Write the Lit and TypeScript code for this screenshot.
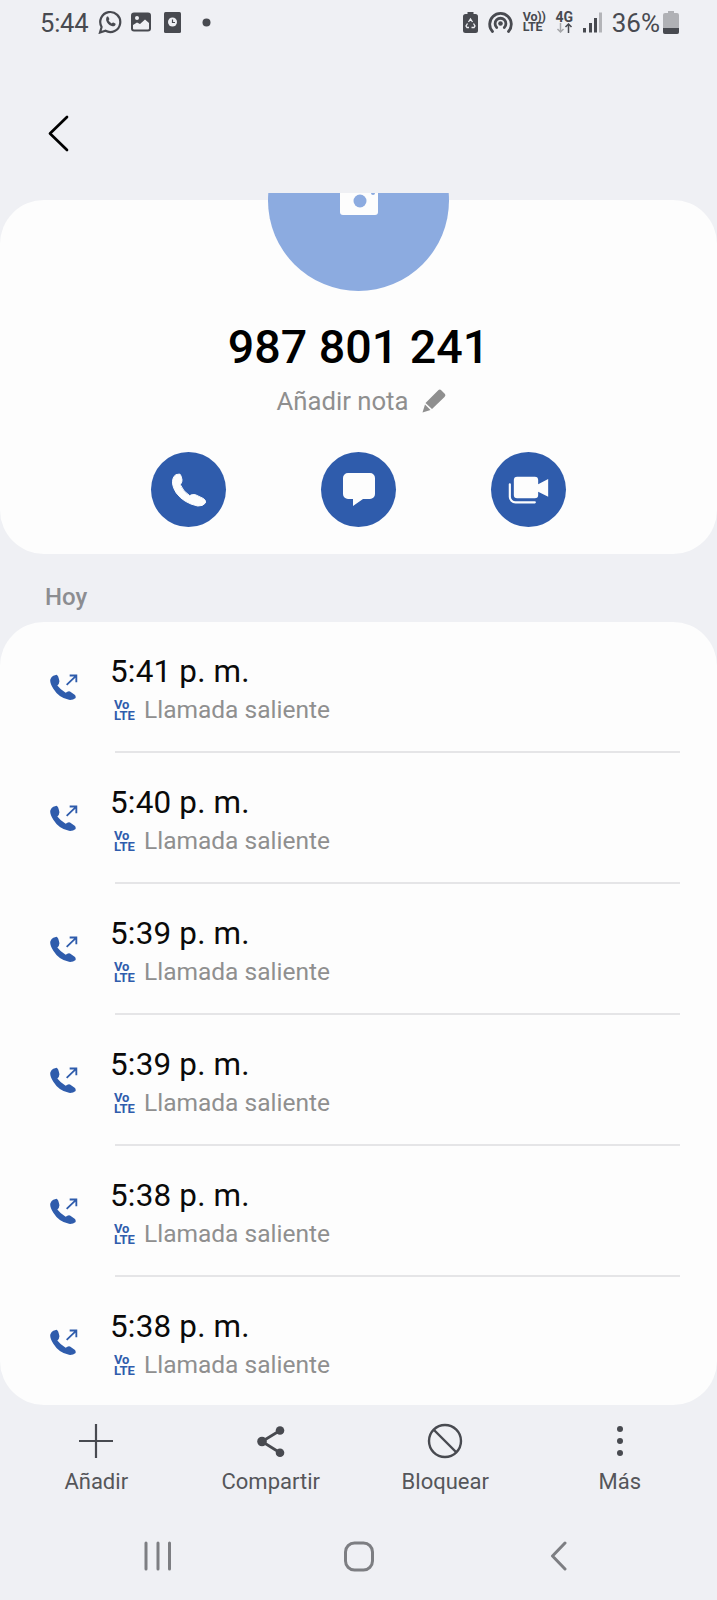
import { LitElement, html, css } from "lit";
import { customElement } from "lit/decorators.js";

const rows = ["5:41 p. m.", "5:40 p. m.", "5:39 p. m.", "5:39 p. m.", "5:38 p. m.", "5:38 p. m."];

@customElement("app-root")
export class AppRoot extends LitElement {
  static styles = css`
    :host { display: block; width: 717px; height: 1600px; background: #eff0f4; font-family: Roboto, "Liberation Sans", sans-serif; overflow: hidden; }
    .status { height: 46px; display: flex; align-items: center; padding: 0 38px 0 40px; color: #484a50; }
    .clock { font-size: 25.500px; line-height: 44px; width: 50px; letter-spacing: -0.2px; }
    .st { display: block; flex: none; margin-bottom: 2px; }
    .spacer { flex: 1; }
    .pct { font-size: 26px; line-height: 44px; margin-left: 10px; }
    .tiny { font-size: 12.500px; font-weight: 700; line-height: 10.500px; margin-bottom: 2px; flex: none; }
    .volte-st { margin-left: 10px; width: 21px; white-space: nowrap; letter-spacing: -0.2px; }
    .g4 { margin-left: 12px; width: 17px; display: flex; flex-direction: column; align-items: center; font-size: 14px; line-height: 11px; }
    .back { height: 147px; padding: 69px 0 0 47px; box-sizing: border-box; }
    .back svg { display: block; }
    .head { background: #fdfdfd; border-radius: 44px; height: 354px; margin-top: 7px; display: flex; flex-direction: column; align-items: center; }
    .clip { width: 181px; height: 98px; margin-top: -7px; overflow: hidden; flex: none; }
    .avatar { width: 181px; height: 181px; border-radius: 50%; background: #8cabe0; margin-top: -83px; position: relative; }
    .avatar svg { position: absolute; left: 72px; top: 69px; }
    .num { font-size: 46.600px; font-weight: 500; line-height: 54px; margin-top: 29px; color: #000; }
    .note { display: flex; align-items: center; font-size: 25.700px; line-height: 30px; color: #8f8f8f; margin: 12px 0 0 6px; gap: 14px; }
    .actions { display: flex; gap: 95px; margin-top: 36px; }
    .act { width: 75px; height: 75px; border-radius: 50%; background: #2f5cac; display: flex; align-items: center; justify-content: center; }
    .hoy { font-size: 24px; font-weight: 500; color: #8c8d91; line-height: 28px; padding: 29px 0 0 45px; height: 68px; box-sizing: border-box; }
    .list { background: #fdfdfd; border-radius: 44px; height: 783px; display: flex; flex-direction: column; }
    .row { height: 131px; flex: none; display: flex; }
    .ic { width: 115px; flex: none; padding: 52px 0 0 50px; box-sizing: border-box; }
    .ic svg { display: block; }
    .txt { flex: 1; margin-right: 37px; padding-top: 30px; border-bottom: 2px solid #e5e5e7; box-sizing: border-box; }
    .row:last-child .txt { border-bottom: none; }
    .time { font-size: 31.400px; line-height: 40px; color: #0a0a0a; letter-spacing: 0.2px; margin-left: -5px; }
    .sub { display: flex; align-items: center; font-size: 24.500px; line-height: 30px; color: #8f8f8f; margin: 3px 0 0 -1px; gap: 7px; }
    .volte { color: #2f5cac; font-size: 13px; font-weight: 700; line-height: 11px; width: 23px; letter-spacing: -0.1px; }
    .tools { display: grid; grid-template-columns: repeat(4, 174.500px); height: 110px; padding: 18px 0 0 9px; box-sizing: border-box; }
    .tool { display: flex; flex-direction: column; align-items: center; color: #55565a; font-size: 22px; line-height: 28px; gap: 9px; }
    .tool svg { display: block; }
    .nav { display: grid; grid-template-columns: repeat(3, 200.500px); height: 85px; justify-items: center; padding: 26px 0 0 58px; box-sizing: border-box; }
    .nav svg { display: block; }
  `;

  private dial(kind: string) {
    return html`<div class="act">${kind === "phone"
      ? html`<svg width="34" height="34" viewBox="95 95 102 102"><path fill="#fdfdfd" stroke="#fdfdfd" stroke-width="3" stroke-linejoin="round" d="M107 100L118 98Q122 100 125 115Q126 122 120 130Q128 150 148 163Q155 158 165 160L190 172Q198 178 195 185Q188 195 172 194Q130 185 108 155Q92 130 98 112Q100 104 107 100Z"/></svg>`
      : kind === "msg"
      ? html`<svg width="32" height="33" viewBox="0 0 32 33"><path fill="#fdfdfd" d="M5 0h22a5 5 0 0 1 5 5v16a5 5 0 0 1-5 5H20L10 33v-7H5a5 5 0 0 1-5-5V5a5 5 0 0 1 5-5Z"/></svg>`
      : html`<svg width="42" height="30" viewBox="85 100 125 90"><path fill="#fdfdfd" d="M112 105H165a10 10 0 0 1 10 10V128L205 112V165L175 150V160a10 10 0 0 1-10 10H112a10 10 0 0 1-10-10V115a10 10 0 0 1 10-10Z"/><path fill="none" stroke="#fdfdfd" stroke-width="6.500" stroke-linecap="round" d="M90 128V165a17 17 0 0 0 17 17H165"/></svg>`}</div>`;
  }

  private statusLeft() {
    return html`
      <svg class="st" width="24" height="24" viewBox="0 0 24 24" style="margin-left:8px"><path fill="none" stroke="#484a50" stroke-width="2.200" d="M2 22.500l1.600-5.500A10 10 0 1 1 7.500 20.800Z"/><path fill="#484a50" d="M8.800 6.800c.4-.4 1.200-.5 1.500 0l1 2c.2.400 0 .8-.7 1.500.6 1.400 1.800 2.500 3.200 3.100.7-.9 1.100-1.100 1.500-.9l2 1c.4.200.4 1 .1 1.600-.6 1.200-2.200 1.500-3.700 1-2.700-.9-4.600-2.800-5.400-5.300-.4-1.500 0-3 .5-4Z"/></svg>
      <svg class="st" width="20" height="20" viewBox="0 0 20 20" style="margin-left:9px"><rect x="0" y="0.500" width="20" height="19" rx="3" fill="#484a50"/><circle cx="6" cy="6" r="2" fill="#eff0f4"/><path fill="#eff0f4" d="M2 16.500v-3.500l4-2.500 3 1.500 5-4.500 4 3.500v5.500a1 1 0 0 1-1 1H3a1 1 0 0 1-1-1Z"/></svg>
      <svg class="st" width="17" height="21" viewBox="0 0 17 21" style="margin-left:13px"><rect width="17" height="21" rx="1.500" fill="#484a50"/><circle cx="8.500" cy="10" r="4.500" fill="#eff0f4"/><path fill="none" stroke="#484a50" stroke-width="1.200" d="M8.500 7.500V10.500H11"/></svg>
      <svg class="st" width="9" height="9" viewBox="0 0 9 9" style="margin-left:21px"><circle cx="4.500" cy="4.500" r="4" fill="#484a50"/></svg>`;
  }

  private statusRight() {
    return html`
      <svg class="st" width="15" height="21" viewBox="0 0 15 21"><path fill="#484a50" d="M4.500 0h6v2h2a2.500 2.500 0 0 1 2.500 2.500v14a2.500 2.500 0 0 1-2.500 2.500h-10A2.500 2.500 0 0 1 0 18.500v-14A2.500 2.500 0 0 1 2.500 2h2Z"/><path fill="none" stroke="#eff0f4" stroke-width="1.300" d="M5.500 10L7.500 7l2 3M10.500 11.500l1.500 2.500-1 1.500H8.500M6 15.500H4L3 14l1.500-2.500"/></svg>
      <svg class="st" width="25" height="21" viewBox="0 0 25 21" style="margin-left:10px"><g fill="none" stroke="#484a50" stroke-width="2.800" stroke-linecap="round"><path d="M4.500 19.500A10.800 10.800 0 1 1 20.500 19.500"/><path d="M8.700 15.500A5.400 5.400 0 1 1 16.300 15.500"/></g><circle cx="12.500" cy="11.500" r="2.300" fill="#484a50"/></svg>
      <div class="tiny volte-st">Vo))<br/>LTE</div>
      <div class="tiny g4">4G<svg width="17" height="10" viewBox="0 0 17 10"><path fill="none" stroke="#a6a7ab" stroke-width="1.500" d="M4.500 0v9M1.500 6l3 3 3-3"/><path fill="none" stroke="#484a50" stroke-width="1.500" d="M12.500 10V1M9.500 4l3-3 3 3"/></svg></div>
      <svg class="st" width="19" height="21" viewBox="0 0 19 21" style="margin-left:10px"><rect x="0" y="16" width="3" height="4.500" fill="#484a50"/><rect x="6" y="11" width="3" height="9.500" fill="#484a50"/><rect x="11" y="6" width="3" height="14.500" fill="#484a50"/><rect x="16" y="0.500" width="3" height="20" fill="#b3b4b8"/></svg>
      <span class="pct">36%</span>
      <svg class="st" width="16" height="23" viewBox="0 0 16 23" style="margin-left:3px"><path fill="#b0b1b5" d="M5 0h6v2h3a2 2 0 0 1 2 2v17a2 2 0 0 1-2 2H2a2 2 0 0 1-2-2V4a2 2 0 0 1 2-2h3Z"/><path fill="#484a50" d="M0 17h16v4a2 2 0 0 1-2 2H2a2 2 0 0 1-2-2Z"/></svg>`;
  }

  private row(t: string) {
    return html`<div class="row">
      <div class="ic"><svg width="28" height="27" viewBox="28 28 84 80"><path fill="#2f5cac" d="M38 33L48 30Q53 32 56 48Q57 55 50 62Q60 75 75 84Q82 78 88 80L102 90Q107 95 104 100Q97 106 85 105Q55 100 38 72Q25 50 30 42Q32 36 38 33Z"/><path fill="none" stroke="#2f5cac" stroke-width="5.500" d="M78 60L106 33M87 32H107V52"/></svg></div>
      <div class="txt">
        <div class="time">${t}</div>
        <div class="sub"><div class="volte">Vo<br/>LTE</div>Llamada saliente</div>
      </div>
    </div>`;
  }

  render() {
    return html`
      <div class="status">
        <span class="clock">5:44</span>
        ${this.statusLeft()}
        <div class="spacer"></div>
        ${this.statusRight()}
      </div>
      <div class="back"><svg width="24" height="38" viewBox="0 0 24 38"><path fill="none" stroke="#000" stroke-width="2.700" stroke-linecap="round" stroke-linejoin="round" d="M20 2L3 18.500 20 35"/></svg></div>
      <div class="head">
        <div class="clip"><div class="avatar"><svg width="38" height="36" viewBox="0 0 38 36"><path fill="#fdfdfd" d="M0 0h38v33a3 3 0 0 1-3 3H3a3 3 0 0 1-3-3Z"/><circle cx="20" cy="22" r="6.500" fill="#8cabe0"/><circle cx="33" cy="14" r="2" fill="#8cabe0"/></svg></div></div>
        <div class="num">987 801 241</div>
        <div class="note">Añadir nota <svg width="24" height="24" viewBox="0 0 24 24"><path fill="#8f8f8f" d="M16.500 1Q18 0 19.500 1.500L23 5Q24 6.500 22.500 8L10 20 3.500 14ZM3 15.500L8.500 21 .5 23.500Z"/></svg></div>
        <div class="actions">${this.dial("phone")}${this.dial("msg")}${this.dial("video")}</div>
      </div>
      <div class="hoy">Hoy</div>
      <div class="list">${rows.map((r) => this.row(r))}</div>
      <div class="tools">
        <div class="tool"><svg width="38" height="36" viewBox="0 0 38 36"><path fill="none" stroke="#484a50" stroke-width="2.200" d="M19 1v34M2 18h34"/></svg>Añadir</div>
        <div class="tool"><svg width="38" height="36" viewBox="0 0 38 36"><g fill="#484a50"><circle cx="10" cy="18.500" r="4.800"/><circle cx="28" cy="7.500" r="4.300"/><circle cx="28" cy="29.700" r="4.300"/></g><path fill="none" stroke="#484a50" stroke-width="2.800" d="M28 7.500L10 18.500l18 11.200"/></svg>Compartir</div>
        <div class="tool"><svg width="38" height="36" viewBox="0 0 38 36"><circle cx="19" cy="18" r="16" fill="none" stroke="#484a50" stroke-width="2.400"/><path stroke="#484a50" stroke-width="2.400" d="M8 7l22 22"/></svg>Bloquear</div>
        <div class="tool"><svg width="38" height="36" viewBox="0 0 38 36"><g fill="#484a50"><circle cx="19" cy="6" r="3"/><circle cx="19" cy="18" r="3"/><circle cx="19" cy="30" r="3"/></g></svg>Más</div>
      </div>
      <div class="nav">
        <div><svg width="30" height="30" viewBox="0 0 30 30"><path stroke="#7d7e82" stroke-width="3" stroke-linecap="round" d="M3 2v26M15 2v26M26.500 2v26"/></svg></div>
        <div><svg width="32" height="31" viewBox="0 0 32 31"><rect x="2.500" y="2" width="27" height="27" rx="9" fill="none" stroke="#7d7e82" stroke-width="3"/></svg></div>
        <div><svg width="20" height="30" viewBox="0 0 20 30"><path fill="none" stroke="#7d7e82" stroke-width="3" stroke-linecap="round" stroke-linejoin="round" d="M16 2L3.500 15 16 28"/></svg></div>
      </div>
    `;
  }
}
